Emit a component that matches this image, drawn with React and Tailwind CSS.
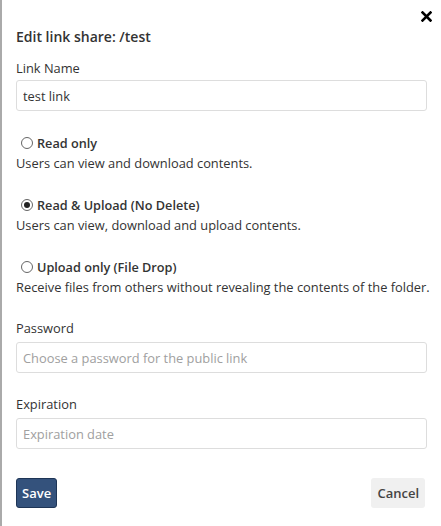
import React, { useState } from "react";

const options = [
  {
    id: "read",
    label: "Read only",
    desc: "Users can view and download contents.",
  },
  {
    id: "upload",
    label: "Read & Upload (No Delete)",
    desc: "Users can view, download and upload contents.",
  },
  {
    id: "drop",
    label: "Upload only (File Drop)",
    desc: "Receive files from others without revealing the contents of the folder.",
  },
];

const Radio = ({ checked }) => (
  <span className="w-[12px] h-[12px] rounded-full border border-[#666] bg-white flex items-center justify-center shrink-0">
    {checked && <span className="w-[6px] h-[6px] rounded-full bg-[#222]"></span>}
  </span>
);

const App = () => {
  const [perm, setPerm] = useState("upload");
  const [name, setName] = useState("test link");

  return (
    <div className="relative w-[441px] h-[526px] bg-white border-l-2 border-[#aaaaaa] pl-[14px] pr-[14px] pt-[27px] text-[#333] font-['Open_Sans',sans-serif] text-[12.85px] leading-[18px]">
      <button className="absolute top-[10px] right-[9px] w-[12px] h-[12px] flex items-center justify-center">
        <svg width="11" height="11" viewBox="0 0 11 11">
          <path d="M1.5 1.5L9.5 9.5M9.5 1.5L1.5 9.5" stroke="#000" strokeWidth="2.6" strokeLinecap="square" />
        </svg>
      </button>

      <h4 className="text-[14px] leading-[20px] font-semibold text-[#333]">Edit link share: /test</h4>

      <div className="mt-[12px]">Link Name</div>
      <input
        className="mt-[3px] w-full h-[31px] border border-[#dddddd] rounded-[3px] px-[6px] text-[12.85px] text-[#333] outline-none"
        value={name}
        onChange={(e) => setName(e.target.value)}
      />

      <div className="mt-[23px]">
        {options.map((opt, i) => (
          <div key={opt.id} className={i > 0 ? "mt-[24px]" : ""}>
            <label
              className="flex items-center gap-[4px] pl-[5px] font-semibold text-[12.7px] cursor-pointer"
              onClick={() => setPerm(opt.id)}
            >
              <Radio checked={perm === opt.id} />
              {opt.label}
            </label>
            <p className="mt-[2px] whitespace-nowrap">{opt.desc}</p>
          </div>
        ))}
      </div>

      <div className="mt-[23px]">Password</div>
      <input
        className="mt-[5px] w-full h-[31px] border border-[#dddddd] rounded-[3px] px-[6px] text-[12.85px] outline-none placeholder:text-[#a0a0a0]"
        placeholder="Choose a password for the public link"
      />

      <div className="mt-[22px]">Expiration</div>
      <input
        className="mt-[5px] w-full h-[31px] border border-[#dddddd] rounded-[3px] px-[6px] text-[12.85px] outline-none placeholder:text-[#a0a0a0]"
        placeholder="Expiration date"
      />

      <div className="mt-[29px] flex justify-between">
        <button className="h-[30px] px-[5px] bg-[#34527c] border border-[#1e3556] rounded-[3px] text-white font-semibold text-[13px]">
          Save
        </button>
        <button className="h-[30px] px-[6px] mr-[2px] bg-[#f0f0f0] rounded-[3px] text-[#444] font-semibold text-[13px]">
          Cancel
        </button>
      </div>
    </div>
  );
};

export default App;
